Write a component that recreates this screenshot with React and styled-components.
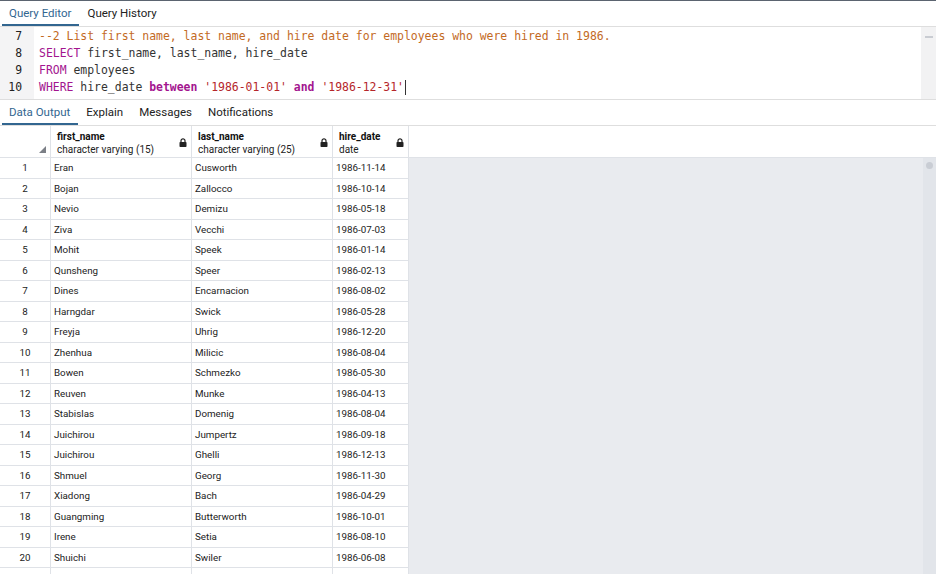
import React from 'react';
import styled, { createGlobalStyle } from 'styled-components';

const rows = [
    ['Eran', 'Cusworth', '1986-11-14'],
    ['Bojan', 'Zallocco', '1986-10-14'],
    ['Nevio', 'Demizu', '1986-05-18'],
    ['Ziva', 'Vecchi', '1986-07-03'],
    ['Mohit', 'Speek', '1986-01-14'],
    ['Qunsheng', 'Speer', '1986-02-13'],
    ['Dines', 'Encarnacion', '1986-08-02'],
    ['Harngdar', 'Swick', '1986-05-28'],
    ['Freyja', 'Uhrig', '1986-12-20'],
    ['Zhenhua', 'Milicic', '1986-08-04'],
    ['Bowen', 'Schmezko', '1986-05-30'],
    ['Reuven', 'Munke', '1986-04-13'],
    ['Stabislas', 'Domenig', '1986-08-04'],
    ['Juichirou', 'Jumpertz', '1986-09-18'],
    ['Juichirou', 'Ghelli', '1986-12-13'],
    ['Shmuel', 'Georg', '1986-11-30'],
    ['Xiadong', 'Bach', '1986-04-29'],
    ['Guangming', 'Butterworth', '1986-10-01'],
    ['Irene', 'Setia', '1986-08-10'],
    ['Shuichi', 'Swiler', '1986-06-08'],
];

const columns = [
    { name: 'first_name', type: 'character varying (15)' },
    { name: 'last_name', type: 'character varying (25)' },
    { name: 'hire_date', type: 'date' },
];

const Lock = () => (
    <svg width="8" height="9" viewBox="0 0 8 9">
        <path d="M2 4V2.8a2 2 0 0 1 4 0V4" fill="none" stroke="#222" strokeWidth="1.2" />
        <rect x="0.5" y="4" width="7" height="5" rx="0.8" fill="#222" />
    </svg>
);

const App = () =>
{
    return (
        <Page>
            <GlobalStyle />
            <Tabs>
                <Tab active>Query Editor</Tab>
                <Tab>Query History</Tab>
            </Tabs>
            <Editor>
                <Gutter>
                    <span>7</span>
                    <span>8</span>
                    <span>9</span>
                    <span>10</span>
                </Gutter>
                <Code>
                    <Line><Comment>--2 List first name, last name, and hire date for employees who were hired in 1986.</Comment></Line>
                    <Line><Keyword>SELECT</Keyword> first_name, last_name, hire_date</Line>
                    <Line><Keyword>FROM</Keyword> employees</Line>
                    <Line><Keyword>WHERE</Keyword> hire_date <Keyword strong>between</Keyword> <Str>'1986-01-01'</Str> <Keyword strong>and</Keyword> <Str>'1986-12-31'</Str><Cursor /></Line>
                </Code>
                <EditorScroll><Dash /></EditorScroll>
            </Editor>
            <Tabs>
                <Tab active>Data Output</Tab>
                <Tab>Explain</Tab>
                <Tab>Messages</Tab>
                <Tab>Notifications</Tab>
            </Tabs>
            <Output>
                <Grid>
                    <HeadCell><Corner /></HeadCell>
                    {columns.map(c => (
                        <HeadCell key={c.name}>
                            <HeadText>
                                <b>{c.name}</b>
                                <span>{c.type}</span>
                            </HeadText>
                            <Lock />
                        </HeadCell>
                    ))}
                    {rows.map((r, i) => (
                        <React.Fragment key={i}>
                            <Cell num>{i + 1}</Cell>
                            <Cell>{r[0]}</Cell>
                            <Cell>{r[1]}</Cell>
                            <Cell>{r[2]}</Cell>
                        </React.Fragment>
                    ))}
                    <Cell num />
                    <Cell />
                    <Cell />
                    <Cell />
                </Grid>
                <Rest>
                    <HeadFill />
                    <BodyFill>
                        <GridScroll><Dot /></GridScroll>
                    </BodyFill>
                </Rest>
            </Output>
        </Page>
    );
}

const GlobalStyle = createGlobalStyle`
    html, body {
        margin: 0;
        padding: 0;
        background: #fff;
        overflow: hidden;
    }
`

const Page = styled.div`
    width: 936px;
    height: 574px;
    display: flex;
    flex-direction: column;
    border-top: 1px solid #5b6470;
    box-sizing: border-box;
    overflow: hidden;
    font-family: Roboto, "Liberation Sans", sans-serif;
    color: #222;
`

const Tabs = styled.div`
    display: flex;
    height: 25px;
    padding-left: 2px;
    border-bottom: 1px solid #dedede;
    flex-shrink: 0;
`

const Tab = styled.div`
    padding: 0 8px 0 7px;
    margin-right: 1px;
    font-size: 11.5px;
    line-height: 24px;
    color: ${p => p.active ? '#326690' : '#222'};
    border-bottom: 2px solid ${p => p.active ? '#326690' : 'transparent'};
    box-sizing: border-box;
    height: 25px;
`

const Editor = styled.div`
    display: flex;
    height: 72px;
    border-bottom: 1px solid #dedede;
    flex-shrink: 0;
`

const Gutter = styled.div`
    width: 34px;
    background: #f4f4f5;
    display: flex;
    flex-direction: column;
    align-items: flex-end;
    padding: 1px 12px 0 0;
    box-sizing: border-box;
    font-family: "DejaVu Sans Mono", monospace;
    font-size: 11.4px;
    color: #222;
    & span {
        line-height: 17px;
    }
`

const Code = styled.div`
    flex: 1;
    padding: 1px 0 0 5px;
    font-family: "DejaVu Sans Mono", monospace;
    font-size: 11.45px;
    color: #333;
`

const Line = styled.div`
    line-height: 17px;
    white-space: pre;
`

const Comment = styled.span`
    color: #c36a1f;
`

const Keyword = styled.span`
    color: #a3158f;
    font-weight: ${p => p.strong ? 'bold' : 'normal'};
`

const Str = styled.span`
    color: #b5262b;
`

const Cursor = styled.span`
    display: inline-block;
    width: 1px;
    height: 15px;
    background: #333;
    vertical-align: middle;
    margin-left: 1px;
`

const EditorScroll = styled.div`
    width: 15px;
    background: #f2f2f3;
    display: flex;
    justify-content: center;
`

const Dash = styled.div`
    width: 8px;
    height: 2px;
    margin-top: 9px;
    background: #c9ccd2;
`

const Output = styled.div`
    flex: 1;
    display: flex;
    min-height: 0;
`

const Grid = styled.div`
    display: grid;
    grid-template-columns: 51px 141px 141px 76px;
    grid-template-rows: 32px;
    grid-auto-rows: 20.5px;
    width: 409px;
    flex-shrink: 0;
    align-content: start;
`

const HeadCell = styled.div`
    position: relative;
    display: flex;
    align-items: flex-start;
    justify-content: space-between;
    padding: 4px 4px 0 6px;
    box-sizing: border-box;
    border-right: 1px solid #dfe2e7;
    border-bottom: 1px solid #dfe2e7;
    background: #fff;
    & svg {
        margin-top: 8px;
    }
`

const HeadText = styled.div`
    display: flex;
    flex-direction: column;
    font-size: 10px;
    line-height: 13px;
    & b {
        font-weight: bold;
        color: #111;
    }
    & span {
        color: #222;
    }
`

const Corner = styled.div`
    position: absolute;
    right: 4px;
    bottom: 4px;
    width: 0;
    height: 0;
    border-left: 7px solid transparent;
    border-bottom: 7px solid #7b7f86;
`

const Cell = styled.div`
    box-sizing: border-box;
    border-right: 1px solid #dfe2e7;
    border-bottom: 1px solid #dfe2e7;
    font-size: 9.8px;
    line-height: 19.5px;
    padding-left: ${p => p.num ? '0' : '3px'};
    text-align: ${p => p.num ? 'center' : 'left'};
    color: #222;
    white-space: nowrap;
    overflow: hidden;
    background: #fff;
`

const Rest = styled.div`
    flex: 1;
    display: flex;
    flex-direction: column;
`

const HeadFill = styled.div`
    height: 32px;
    border-bottom: 1px solid #dfe2e7;
    box-sizing: border-box;
    background: #fff;
`

const BodyFill = styled.div`
    flex: 1;
    background: #e9ebef;
    display: flex;
    justify-content: flex-end;
`

const GridScroll = styled.div`
    width: 13px;
    background: #e2e5ea;
    display: flex;
    justify-content: center;
`

const Dot = styled.div`
    width: 7px;
    height: 7px;
    border-radius: 50%;
    background: #c9cdd4;
    margin-top: 4px;
`

export default App;
